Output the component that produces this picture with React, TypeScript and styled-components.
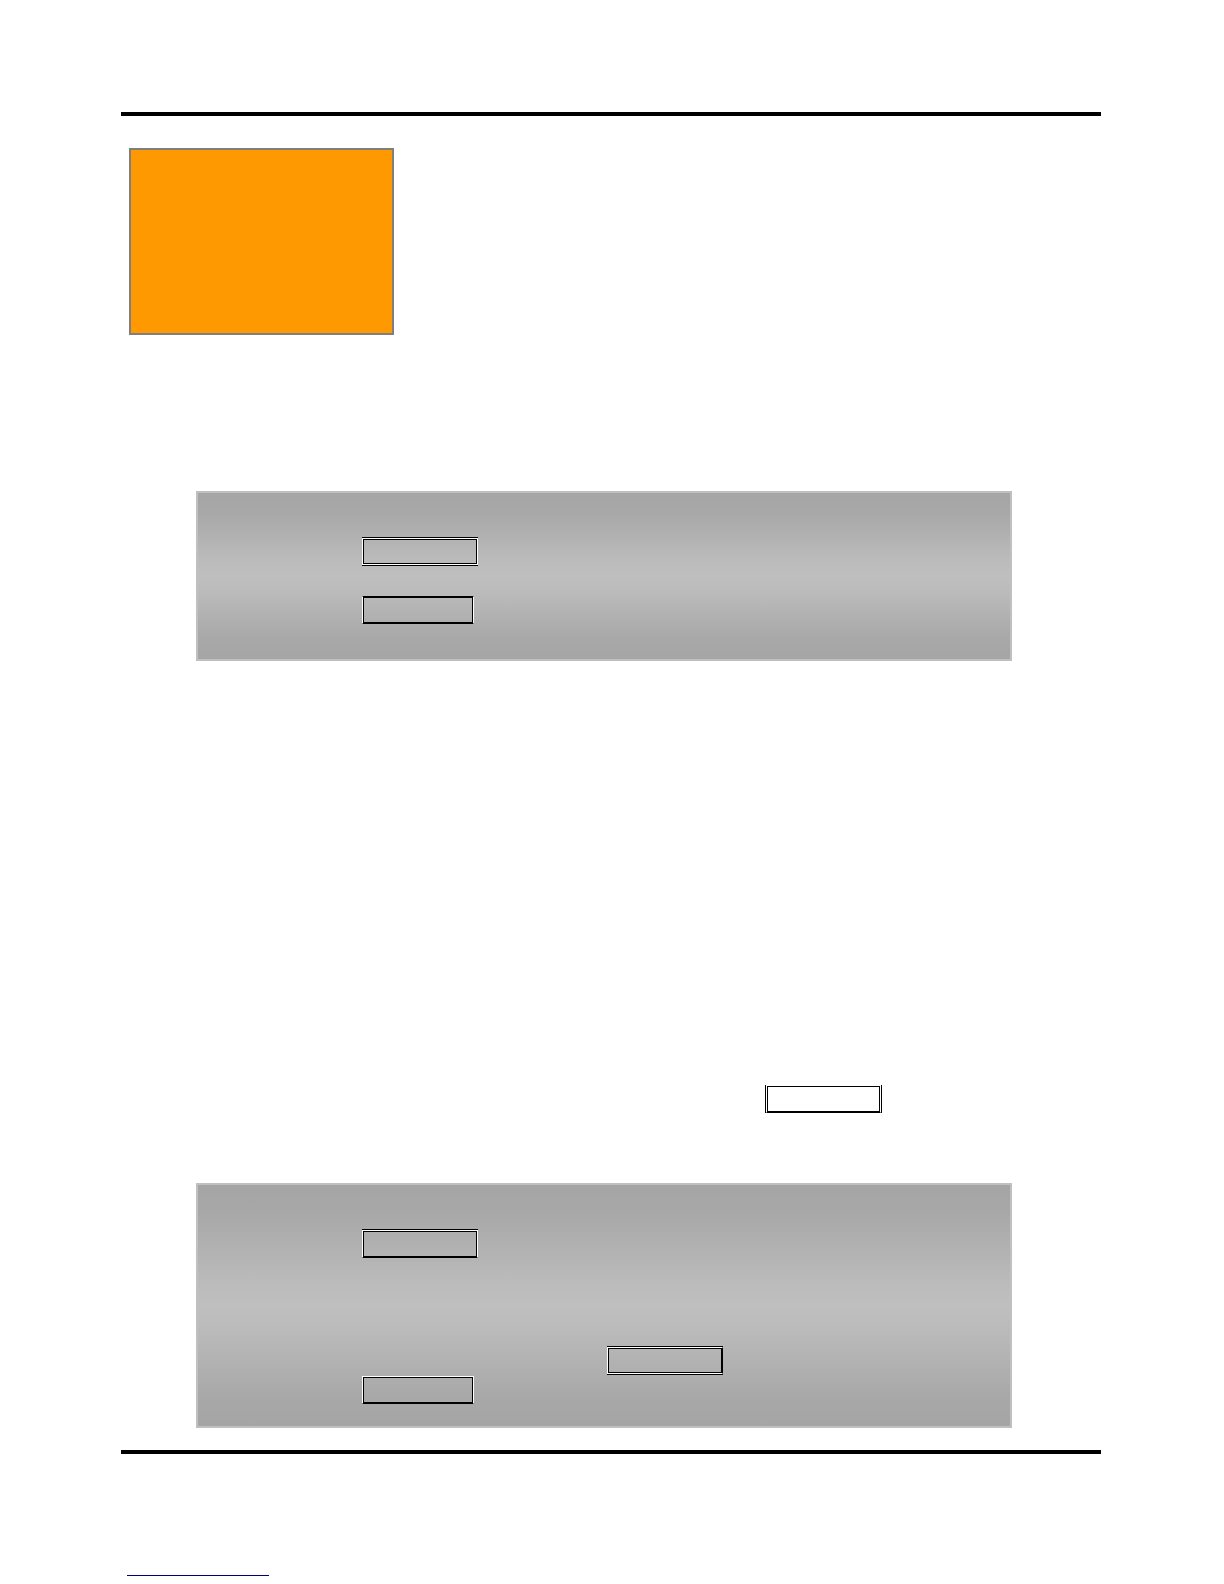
import React from "react";
import styled, { createGlobalStyle } from "styled-components";

type Edge = "double" | "thick" | "light";

interface Edges {
  top: Edge;
  right: Edge;
  bottom: Edge;
  left: Edge;
}

const GlobalStyle = createGlobalStyle`
  *, *::before, *::after { box-sizing: border-box; }
  body {
    margin: 0;
    background: #ffffff;
    font-family: "Liberation Sans", Arial, sans-serif;
    font-size: 16px;
  }
`;

const Page = styled.div`
  display: flex;
  flex-direction: column;
  padding: 112px 123px 8px 121px;
`;

const Rule = styled.hr`
  width: 100%;
  height: 4px;
  margin: 0;
  border: 0;
  background: #000000;
`;

const Content = styled.main`
  display: flex;
  flex-direction: column;
  padding: 32px 0 22px;
`;

const Banner = styled.section`
  width: 265px;
  height: 187px;
  margin: 0 0 156px 8px;
  border: 2px solid #7f7f7f;
  background: #ff9902;
`;

const Panel = styled.section<{ $bottom: number }>`
  display: flex;
  flex-direction: column;
  align-items: flex-start;
  margin: 0 89px 0 75px;
  padding: 44px 164px ${(p) => p.$bottom}px;
  border: 2px solid #c0c0c0;
  background: linear-gradient(
    #a5a5a5 0%,
    #a8a8a8 12%,
    #bcbcbc 42%,
    #bfbfbf 50%,
    #bcbcbc 58%,
    #a8a8a8 88%,
    #a5a5a5 100%
  );
`;

const Row = styled.div<{ $before?: number; $indent?: number }>`
  display: flex;
  padding-top: ${(p) => p.$before ?? 0}px;
  padding-left: ${(p) => p.$indent ?? 0}px;
`;

const Prose = styled.section`
  padding: 424px 0 70px 644px;
`;

const outerWidth = (edge: Edge) => (edge === "double" ? "1px" : "0");
const lineColor = (edge: Edge) => (edge === "thick" ? "#000000" : "#ffffff");

const Frame = styled.label<{ $edges: Edges }>`
  display: flex;
  width: fit-content;
  border: 0 solid #000000;
  border-width: ${({ $edges: e }) =>
    [e.top, e.right, e.bottom, e.left].map(outerWidth).join(" ")};
`;

const Box = styled.input<{ $edges: Edges; $narrow?: boolean }>`
  width: ${(p) => (p.$narrow ? 112 : p.$edges.left === "double" ? 115 : 116)}px;
  height: ${(p) => (p.$edges.bottom === "double" ? 27 : 28)}px;
  margin: 0;
  padding: 0 6px;
  border: 1px solid;
  border-color: ${({ $edges: e }) =>
    [e.top, e.right, e.bottom, e.left].map(lineColor).join(" ")};
  border-radius: 0;
  outline: 0;
  background: transparent;
  box-shadow: inset 0 0 0 1px #000000;
  font: inherit;
  color: #000000;
`;

const FooterLink = styled.a`
  display: block;
  width: 142px;
  height: 20px;
  border-bottom: 1px solid #000080;
`;

const Footer = styled.footer`
  padding: 102px 0 0 6px;
`;

interface FieldProps {
  name: string;
  narrow?: boolean;
  edges?: Partial<Edges>;
}

function Field({ name, narrow, edges }: FieldProps) {
  const all: Edges = {
    top: "double",
    right: "light",
    bottom: "thick",
    left: "light",
    ...edges,
  };
  return (
    <Frame $edges={all}>
      <Box type="text" name={name} aria-label={name} $edges={all} $narrow={narrow} />
    </Frame>
  );
}

export default function App() {
  return (
    <>
      <GlobalStyle />
      <Page>
        <Rule />
        <Content>
          <Banner />
          <Panel $bottom={35}>
            <Row>
              <Field name="first" edges={{ bottom: "double" }} />
            </Row>
            <Row $before={30}>
              <Field name="second" narrow edges={{ top: "thick" }} />
            </Row>
          </Panel>
          <Prose>
            <Field
              name="third"
              edges={{ top: "light", left: "double", right: "double" }}
            />
          </Prose>
          <Panel $bottom={22}>
            <Row>
              <Field name="fourth" />
            </Row>
            <Row $before={88} $indent={245}>
              <Field name="fifth" edges={{ bottom: "double", right: "thick" }} />
            </Row>
            <Row $before={1}>
              <Field name="sixth" narrow edges={{ top: "light" }} />
            </Row>
          </Panel>
        </Content>
        <Rule />
        <Footer>
          <FooterLink href="#" aria-label="Website" />
        </Footer>
      </Page>
    </>
  );
}
